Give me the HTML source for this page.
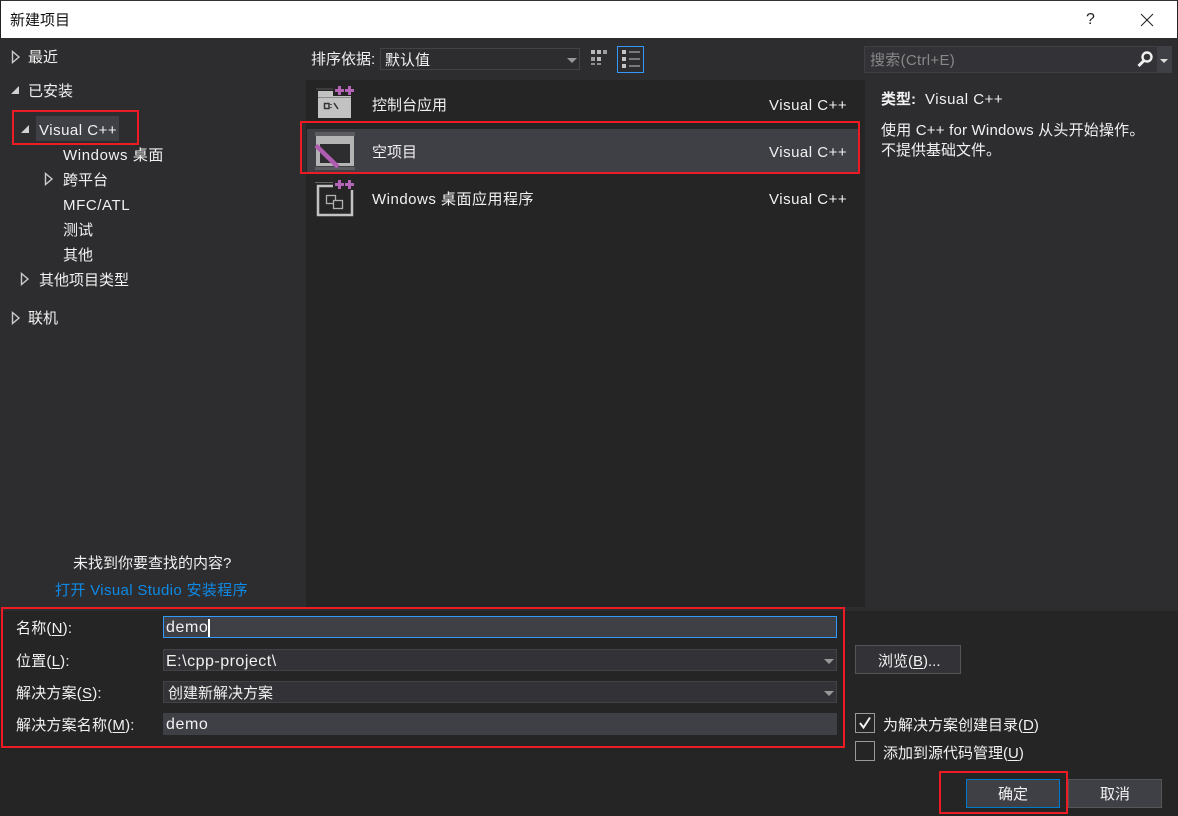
<!DOCTYPE html>
<html><head><meta charset="utf-8"><style>
html,body{margin:0;padding:0;width:1178px;height:816px;overflow:hidden;background:#2d2d30}
body{position:relative;font:15px/20px "Liberation Sans","Noto Sans CJK SC",sans-serif;color:#f1f1f1}
div,svg{position:absolute;box-sizing:border-box}
.t{white-space:nowrap;height:20px;margin-top:1px}
.r{border:2px solid #ed1c24}
.dd{background:#333337;border:1px solid #434346}
.ar{width:0;height:0;border-left:5px solid transparent;border-right:5px solid transparent;border-top:5px solid #999}
.v{letter-spacing:.5px}
.l{font-size:16px;letter-spacing:.6px}
u{text-underline-offset:2px}
</style></head><body>
<div style="left:0;top:0;width:1178px;height:38px;background:#fff;border-top:1px solid #333;border-left:1px solid #222;border-right:1px solid #222"></div>
<div class="t" style="left:10px;top:10px;color:#111">新建项目</div>
<div class="t" style="left:1086px;top:9px;color:#222;font-size:16px">?</div>
<svg style="left:1140px;top:13px" width="14" height="14"><path d="M1 1L13 13M13 1L1 13" stroke="#222" fill="none"/></svg>

<div style="left:306px;top:80px;width:559px;height:527px;background:#252526"></div>
<div style="left:307px;top:129px;width:553px;height:44px;background:#3f3f46"></div>
<div style="left:0;top:611px;width:1178px;height:205px;background:#252526"></div>

<!-- left tree -->
<svg style="left:11px;top:50px" width="10" height="14"><path d="M1.5 1.5L8 7L1.5 12.5Z" fill="none" stroke="#ccc" stroke-width="1.4"/></svg>
<div class="t" style="left:28px;top:47px">最近</div>
<svg style="left:10px;top:85px" width="10" height="10"><path d="M9 1V9H1Z" fill="#d0d0d0"/></svg>
<div class="t" style="left:28px;top:81px">已安装</div>
<div style="left:36px;top:116px;width:83px;height:25px;background:#3f3f46"></div>
<svg style="left:20px;top:124px" width="10" height="10"><path d="M9 1V9H1Z" fill="#d0d0d0"/></svg>
<div class="t v" style="left:39px;top:120px">Visual C++</div>
<div class="t" style="left:63px;top:145px;letter-spacing:.6px">Windows 桌面</div>
<svg style="left:44px;top:172px" width="10" height="14"><path d="M1.5 1.5L8 7L1.5 12.5Z" fill="none" stroke="#ccc" stroke-width="1.4"/></svg>
<div class="t" style="left:63px;top:170px">跨平台</div>
<div class="t" style="left:63px;top:195px;letter-spacing:.6px">MFC/ATL</div>
<div class="t" style="left:63px;top:220px">测试</div>
<div class="t" style="left:63px;top:245px">其他</div>
<svg style="left:20px;top:272px" width="10" height="14"><path d="M1.5 1.5L8 7L1.5 12.5Z" fill="none" stroke="#ccc" stroke-width="1.4"/></svg>
<div class="t" style="left:39px;top:270px">其他项目类型</div>
<svg style="left:11px;top:311px" width="10" height="14"><path d="M1.5 1.5L8 7L1.5 12.5Z" fill="none" stroke="#ccc" stroke-width="1.4"/></svg>
<div class="t" style="left:28px;top:308px">联机</div>
<div class="t" style="left:73px;top:553px">未找到你要查找的内容?</div>
<div class="t" style="left:55px;top:580px;color:#0e8ae6;letter-spacing:.35px">打开 Visual Studio 安装程序</div>

<!-- sort -->
<div class="t" style="left:311px;top:49px">排序依据:</div>
<div class="dd" style="left:380px;top:48px;width:200px;height:22px;background:#2d2d30"></div>
<div class="t" style="left:385px;top:50px">默认值</div>
<div class="ar" style="left:567px;top:58px"></div>
<svg style="left:590px;top:49px" width="18" height="20" fill="#b8b8b8"><rect x="1" y="1" width="4" height="4"/><rect x="7" y="1" width="4" height="4"/><rect x="13" y="1" width="4" height="4" opacity=".8"/><rect x="1" y="8" width="4" height="4" opacity=".8"/><rect x="7" y="8" width="4" height="4"/><rect x="1" y="14" width="4" height="2" opacity=".7"/><rect x="7" y="14" width="4" height="2" opacity=".7"/></svg>
<div style="left:617px;top:46px;width:27px;height:27px;border:1px solid #3399ff"></div>
<svg style="left:620px;top:49px" width="21" height="21" fill="#c4c4c4"><rect x="2" y="1" width="4" height="4"/><rect x="2" y="8" width="4" height="4"/><rect x="2" y="15" width="4" height="4"/><rect x="9" y="2.500" width="11" height="1"/><rect x="9" y="9.500" width="11" height="1"/><rect x="9" y="16.500" width="11" height="1"/></svg>

<!-- search -->
<div style="left:864px;top:46px;width:308px;height:27px;background:#333337;border:1px solid #3f3f46"></div>
<div style="left:1157px;top:47px;width:14px;height:25px;background:#3f3f46"></div>
<div class="t" style="left:870px;top:50px;color:#888;letter-spacing:.3px">搜索(Ctrl+E)</div>
<svg style="left:1136px;top:50px" width="20" height="18"><circle cx="11" cy="7" r="4.5" fill="none" stroke="#f0f0f0" stroke-width="2.4"/><path d="M8 10.500L2.500 16" stroke="#f0f0f0" stroke-width="3"/></svg>
<div class="ar" style="left:1160px;top:59px;border-left-width:4px;border-right-width:4px;border-top:4px solid #ddd"></div>

<!-- list items -->
<svg style="left:310px;top:80px" width="50" height="45">
<path d="M6 9H23" stroke="#555"/>
<rect x="8" y="11" width="33" height="27" fill="#c2c2c2"/>
<path d="M8 17.500H41" stroke="#8a8a8a"/>
<rect x="23" y="5" width="21" height="11" fill="#252526"/>
<g fill="#b565b5"><path d="M25 9h3V6h3v3h3v3h-3v3h-3v-3h-3z"/><path d="M35 9h3V6h3v3h3v3h-3v3h-3v-3h-3z"/></g>
<path d="M14.500 23.500H19V28.500H14.500ZM21 24V25M21 27V28M24 23L28 29" fill="none" stroke="#333" stroke-width="1.500"/>
</svg>
<div class="t" style="left:372px;top:95px">控制台应用</div>
<div class="t v" style="left:769px;top:95px">Visual C++</div>
<svg style="left:310px;top:125px" width="50" height="50">
<rect x="5" y="7" width="40" height="4" fill="#5c5c60"/>
<rect x="6" y="11" width="38" height="30" fill="#b4b4b4"/>
<rect x="10" y="19" width="30" height="19" fill="#2d2d30"/>
<rect x="5" y="42" width="40" height="3" fill="#5c5c60"/>
<path d="M6 20.500L28 42" stroke="#b05cb0" stroke-width="4.500"/>
</svg>
<div class="t" style="left:372px;top:142px">空项目</div>
<div class="t v" style="left:769px;top:142px">Visual C++</div>
<svg style="left:310px;top:175px" width="50" height="45">
<path d="M5 7.500H23" stroke="#666"/>
<rect x="8" y="11" width="34" height="29" fill="none" stroke="#c2c2c2" stroke-width="2.500"/>
<rect x="23" y="4" width="22" height="11" fill="#252526"/>
<g fill="#b565b5"><path d="M25 8h3V5h3v3h3v3h-3v3h-3v-3h-3z"/><path d="M35 8h3V5h3v3h3v3h-3v3h-3v-3h-3z"/></g>
<rect x="16.500" y="20.500" width="9" height="8" fill="none" stroke="#b0b0b0" stroke-width="1.300"/>
<rect x="23.500" y="25.500" width="9" height="8" fill="#252526" stroke="#b0b0b0" stroke-width="1.300"/>
</svg>
<div class="t" style="left:372px;top:189px;letter-spacing:.5px">Windows 桌面应用程序</div>
<div class="t v" style="left:769px;top:189px">Visual C++</div>

<!-- right info -->
<div class="t" style="left:881px;top:89px;font-weight:bold">类型:</div>
<div class="t v" style="left:925px;top:89px">Visual C++</div>
<div class="t" style="left:881px;top:120px;letter-spacing:.2px">使用 C++ for Windows 从头开始操作。</div>
<div class="t" style="left:881px;top:140px">不提供基础文件。</div>

<!-- form -->
<div class="t" style="left:16px;top:618px;letter-spacing:.2px">名称(<u>N</u>):</div>
<div style="left:163px;top:616px;width:674px;height:22px;background:#3f3f46;border:1px solid #3399ff"></div>
<div class="t l" style="left:166px;top:617px">demo</div>
<div style="left:208px;top:619px;width:2px;height:18px;background:#fff"></div>
<div class="t" style="left:16px;top:651px;letter-spacing:.2px">位置(<u>L</u>):</div>
<div class="dd" style="left:163px;top:649px;width:674px;height:22px"></div>
<div class="t" style="left:166px;top:651px;font-size:16px;letter-spacing:.5px">E:\cpp-project\</div>
<div class="ar" style="left:824px;top:659px"></div>
<div class="t" style="left:16px;top:683px;letter-spacing:.2px">解决方案(<u>S</u>):</div>
<div class="dd" style="left:163px;top:681px;width:674px;height:22px"></div>
<div class="t" style="left:168px;top:683px">创建新解决方案</div>
<div class="ar" style="left:824px;top:691px"></div>
<div class="t" style="left:16px;top:715px;letter-spacing:.2px">解决方案名称(<u>M</u>):</div>
<div style="left:163px;top:713px;width:674px;height:22px;background:#3f3f46"></div>
<div class="t l" style="left:166px;top:714px">demo</div>

<div class="dd" style="left:855px;top:645px;width:106px;height:29px;border-color:#555"></div>
<div class="t" style="left:878px;top:651px">浏览(<u>B</u>)...</div>
<div style="left:855px;top:713px;width:20px;height:20px;border:1px solid #999"></div>
<svg style="left:857px;top:715px" width="16" height="16"><path d="M3 8L6.500 12.500L13 2.500" fill="none" stroke="#f1f1f1" stroke-width="2"/></svg>
<div class="t" style="left:883px;top:715px">为解决方案创建目录(<u>D</u>)</div>
<div style="left:855px;top:741px;width:20px;height:20px;border:1px solid #999"></div>
<div class="t" style="left:883px;top:743px">添加到源代码管理(<u>U</u>)</div>
<div style="left:966px;top:779px;width:94px;height:29px;background:#3f3f46;border:1px solid #007acc"></div>
<div class="t" style="left:998px;top:784px">确定</div>
<div style="left:1068px;top:779px;width:94px;height:29px;background:#3f3f46;border:1px solid #555"></div>
<div class="t" style="left:1100px;top:784px">取消</div>

<!-- red highlights -->
<div class="r" style="left:12px;top:110px;width:127px;height:35px"></div>
<div class="r" style="left:300px;top:121px;width:560px;height:53px"></div>
<div class="r" style="left:1px;top:607px;width:844px;height:141px"></div>
<div class="r" style="left:939px;top:771px;width:129px;height:43px"></div>
</body></html>
